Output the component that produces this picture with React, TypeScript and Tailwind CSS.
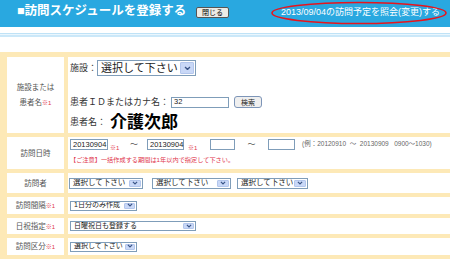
import React from 'react';

const jp = "font-['Liberation_Sans','Noto_Sans_CJK_JP',sans-serif]";

const Chevron = ({ size = 6 }: { size?: number }) => (
  <svg width={size} height={size * 0.7} viewBox="0 0 10 7">
    <path d="M1.5 1.5 L5 5 L8.5 1.5" fill="none" stroke="#3b5587" strokeWidth="2" />
  </svg>
);

interface SelectProps {
  label: string;
  className: string;
  arrow?: string;
  big?: boolean;
}

const Select: React.FC<SelectProps> = ({ label, className, arrow = 'w-[11px]', big }) => (
  <div className={`flex items-stretch border border-[#7f9db9] bg-white text-[#222] ${className}`}>
    <span className="flex-1 flex items-center pl-[3px] whitespace-nowrap overflow-hidden">{label}</span>
    <span className={`${arrow} m-[1px] flex items-center justify-center bg-[#c9d8f7] border border-[#b3c6ec] rounded-[1px]`}>
      <Chevron size={big ? 7 : 6} />
    </span>
  </div>
);

const Input: React.FC<{ className: string; value?: string }> = ({ className, value }) => (
  <div className={`flex items-center border border-[#7f9db9] bg-white pl-[2px] text-[7.5px] text-[#222] ${className}`}>{value}</div>
);

const Req = () => <span className="text-[#e0344b] text-[6px] leading-none">※1</span>;

const Label: React.FC<{ children: React.ReactNode }> = ({ children }) => (
  <div className="bg-white flex items-center justify-center text-center text-[7.5px] leading-[15px] text-[#555]">
    <div className="whitespace-nowrap">{children}</div>
  </div>
);

export default function App() {
  return (
    <div className={`w-[450px] h-[260px] overflow-hidden bg-white ${jp}`}>
      <header className="relative h-[27px] bg-[#29a8e0] flex items-start">
        <h1 className="w-[196px] pl-[17px] pt-[4px] text-[12.5px] leading-[14px] font-bold text-white whitespace-nowrap">■訪問スケジュールを登録する</h1>
        <button className="mt-[7px] w-[33px] h-[11px] flex items-center justify-center bg-[#ecebe6] border border-[#555] rounded-[2px] text-[7px] leading-none text-black">閉じる</button>
        <span className="ml-auto mr-[10px] mt-[7px] text-[9px] leading-[10px] text-white whitespace-nowrap">2013/09/04の訪問予定を照会(変更)する</span>
        <svg className="absolute left-[270px] top-[1px]" width="178" height="24" viewBox="0 0 178 24">
          <ellipse cx="89" cy="12" rx="87" ry="10.5" fill="none" stroke="#e8141c" strokeWidth="1.6" />
        </svg>
      </header>
      <div className="h-[6px]" />
      <div className="h-[1px] bg-[#bfe2f6]" />
      <div className="h-[1px] bg-[#eaf6fd]" />
      <div className="h-[2px] bg-[#cbe8f9]" />
      <div className="h-[15px]" />

      <div className="bg-[#fde9b7] pt-[5px] pl-[7px] pb-[4px] grid grid-cols-[57px_1fr] gap-[4px] text-[#333]">
        <Label>
          施設または<br />患者名<Req />
        </Label>
        <div className="bg-white h-[76px] pl-[2px] flex flex-col">
          <div className="mt-[3px] h-[16px] flex items-center">
            <span className="w-[27px] text-[9px] leading-none">施設：</span>
            <Select label="選択して下さい" className="w-[99px] h-[16px] text-[11px]" arrow="w-[14px]" big />
          </div>
          <div className="mt-[20px] h-[12px] flex items-center">
            <span className="w-[101px] text-[9px] leading-none whitespace-nowrap">患者ＩＤまたはカナ名：</span>
            <Input className="w-[58px] h-[11px]" value="32" />
            <button className="ml-[5px] w-[28px] h-[12px] flex items-center justify-center bg-[#efefef] border border-[#7d95b8] rounded-[3px] text-[7px] leading-none text-[#222]">検索</button>
          </div>
          <div className="mt-[5px] h-[18px] flex items-center">
            <span className="w-[40px] text-[9px] leading-none">患者名：</span>
            <span className="text-[17px] leading-none font-bold text-black">介護次郎</span>
          </div>
        </div>

        <Label>訪問日時</Label>
        <div className="bg-white h-[32px] pl-[2px] flex flex-col">
          <div className="mt-[2px] h-[11px] flex items-center whitespace-nowrap">
            <Input className="w-[38px] h-[11px]" value="20130904" />
            <span className="w-[22px] pl-[2px]"><Req /></span>
            <span className="w-[17px] text-[8px] leading-none text-[#555]">〜</span>
            <Input className="w-[37px] h-[11px]" value="20130904" />
            <span className="w-[26px] pl-[4px]"><Req /></span>
            <Input className="w-[25px] h-[11px]" />
            <span className="w-[33px] text-center text-[8px] leading-none text-[#555]">〜</span>
            <Input className="w-[27px] h-[11px]" />
            <span className="ml-[7px] text-[6.5px] leading-none text-[#666] whitespace-pre">(例：20120910  〜  20130909   0900〜1030)</span>
          </div>
          <div className="mt-[6px] text-[6.2px] leading-[8px] text-[#e0344b] whitespace-nowrap">【ご注意】一括作成する期間は1年以内で指定して下さい。</div>
        </div>

        <Label>訪問者</Label>
        <div className="bg-white h-[20px] pl-[1px] flex items-center text-[7.5px]">
          <Select label="選択して下さい" className="w-[74px] h-[11px]" arrow="w-[12px]" />
          <Select label="選択して下さい" className="ml-[9px] w-[79px] h-[11px]" arrow="w-[12px]" />
          <Select label="選択して下さい" className="ml-[6px] w-[71px] h-[11px]" arrow="w-[12px]" />
        </div>

        <Label>
          訪問間隔<Req />
        </Label>
        <div className="bg-white h-[17px] pl-[2px] flex items-center text-[7px]">
          <Select label="1日分のみ作成" className="w-[67px] h-[10px]" />
        </div>

        <Label>
          日祝指定<Req />
        </Label>
        <div className="bg-white h-[16px] pl-[2px] flex items-center text-[7px]">
          <Select label="日曜祝日も登録する" className="w-[126px] h-[10px]" />
        </div>

        <Label>
          訪問区分<Req />
        </Label>
        <div className="bg-white h-[17px] pl-[2px] flex items-center text-[7px]">
          <Select label="選択して下さい" className="w-[67px] h-[10px]" arrow="w-[10px]" />
        </div>
      </div>
    </div>
  );
}
